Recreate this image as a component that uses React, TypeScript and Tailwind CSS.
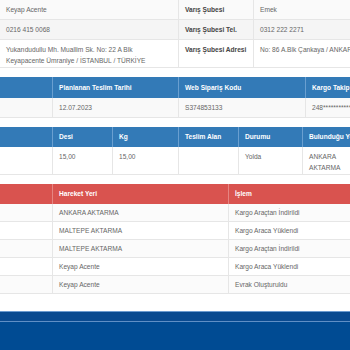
export default function App() {
  const font = { fontFamily: '"Liberation Sans", Arial, sans-serif' };

  const movements = [
    { place: 'ANKARA AKTARMA', action: 'Kargo Araçtan İndirildi' },
    { place: 'MALTEPE AKTARMA', action: 'Kargo Araca Yüklendi' },
    { place: 'MALTEPE AKTARMA', action: 'Kargo Araçtan İndirildi' },
    { place: 'Keyap Acente', action: 'Kargo Araca Yüklendi' },
    { place: 'Keyap Acente', action: 'Evrak Oluşturuldu' },
  ];

  return (
    <div className="w-[350px] h-[350px] overflow-hidden bg-white text-[6.6px] leading-[11px] text-[#666]" style={font}>
      {/* Gönderi bilgileri */}
      <div className="w-[420px]">
        <div className="grid grid-cols-[178px_75px_1fr] h-[20px] bg-[#fafafa] border-b border-[#e6e6e6]">
          <div className="px-[6px] pt-[4px]">Keyap Acente</div>
          <div className="px-[6px] pt-[4px] border-l border-[#e6e6e6] font-bold text-[#444]">Varış Şubesi</div>
          <div className="px-[6px] pt-[4px] border-l border-[#e6e6e6]">Emek</div>
        </div>
        <div className="grid grid-cols-[178px_75px_1fr] h-[20px] bg-[#f5f5f5] border-b border-[#e6e6e6]">
          <div className="px-[6px] pt-[4px]">0216 415 0068</div>
          <div className="px-[6px] pt-[4px] border-l border-[#e6e6e6] font-bold text-[#444]">Varış Şubesi Tel.</div>
          <div className="px-[6px] pt-[4px] border-l border-[#e6e6e6]">0312 222 2271</div>
        </div>
        <div className="grid grid-cols-[178px_75px_1fr] h-[28px] bg-white border-b border-[#e6e6e6]">
          <div className="px-[6px] pt-[4px]">
            Yukarıdudullu Mh. Muallim Sk. No: 22 A Blk
            <br />
            Keyapacente Ümraniye / İSTANBUL / TÜRKİYE
          </div>
          <div className="px-[6px] pt-[4px] border-l border-[#e6e6e6] font-bold text-[#444] whitespace-nowrap">Varış Şubesi Adresi</div>
          <div className="px-[6px] pt-[4px] border-l border-[#e6e6e6] whitespace-nowrap">No: 86 A.Blk Çankaya / ANKARA</div>
        </div>
      </div>

      {/* Teslim bilgileri */}
      <div className="w-[420px] mt-[9px]">
        <div className="grid grid-cols-[52px_126px_127px_1fr] h-[21px] bg-[#337ab7] text-white font-bold">
          <div className="px-[6px] pt-[5px]"></div>
          <div className="px-[6px] pt-[5px] border-l border-[#6a9fd0]">Planlanan Teslim Tarihi</div>
          <div className="px-[6px] pt-[5px] border-l border-[#6a9fd0]">Web Sipariş Kodu</div>
          <div className="px-[6px] pt-[5px] border-l border-[#6a9fd0] whitespace-nowrap">Kargo Takip No</div>
        </div>
        <div className="grid grid-cols-[52px_126px_127px_1fr] h-[20px] bg-[#f9f9f9] border-b border-[#e6e6e6]">
          <div className="px-[6px] pt-[4px]"></div>
          <div className="px-[6px] pt-[4px] border-l border-[#e6e6e6]">12.07.2023</div>
          <div className="px-[6px] pt-[4px] border-l border-[#e6e6e6]">S374853133</div>
          <div className="px-[6px] pt-[4px] border-l border-[#e6e6e6] whitespace-nowrap">248**************</div>
        </div>
      </div>

      {/* Kargo detayları */}
      <div className="w-[420px] mt-[9px]">
        <div className="grid grid-cols-[52px_60px_66px_60px_64px_1fr] h-[20px] bg-[#337ab7] text-white font-bold">
          <div className="px-[6px] pt-[4px]"></div>
          <div className="px-[6px] pt-[4px] border-l border-[#6a9fd0]">Desi</div>
          <div className="px-[6px] pt-[4px] border-l border-[#6a9fd0]">Kg</div>
          <div className="px-[6px] pt-[4px] border-l border-[#6a9fd0]">Teslim Alan</div>
          <div className="px-[6px] pt-[4px] border-l border-[#6a9fd0]">Durumu</div>
          <div className="px-[6px] pt-[4px] border-l border-[#6a9fd0] whitespace-nowrap">Bulunduğu Yer</div>
        </div>
        <div className="grid grid-cols-[52px_60px_66px_60px_64px_1fr] h-[28px] bg-white border-b border-[#e6e6e6]">
          <div className="px-[6px] pt-[4px]"></div>
          <div className="px-[6px] pt-[4px] border-l border-[#e6e6e6]">15,00</div>
          <div className="px-[6px] pt-[4px] border-l border-[#e6e6e6]">15,00</div>
          <div className="px-[6px] pt-[4px] border-l border-[#e6e6e6]"></div>
          <div className="px-[6px] pt-[4px] border-l border-[#e6e6e6]">Yolda</div>
          <div className="px-[6px] pt-[4px] border-l border-[#e6e6e6]">
            ANKARA
            <br />
            AKTARMA
          </div>
        </div>
      </div>

      {/* Hareketler */}
      <div className="w-[420px] mt-[9px]">
        <div className="grid grid-cols-[52px_176px_1fr] h-[20px] bg-[#d9534f] text-white font-bold">
          <div className="px-[6px] pt-[4px]"></div>
          <div className="px-[6px] pt-[4px] border-l border-[#e58582]">Hareket Yeri</div>
          <div className="px-[6px] pt-[4px] border-l border-[#e58582]">İşlem</div>
        </div>
        {movements.map((m, i) => (
          <div
            key={i}
            className={`grid grid-cols-[52px_176px_1fr] h-[18px] border-b border-[#e6e6e6] ${i % 2 === 0 ? 'bg-[#fbfbfb]' : 'bg-white'}`}
          >
            <div className="px-[6px] pt-[3px]"></div>
            <div className="px-[6px] pt-[3px] border-l border-[#e6e6e6]">{m.place}</div>
            <div className="px-[6px] pt-[3px] border-l border-[#e6e6e6]">{m.action}</div>
          </div>
        ))}
      </div>

      {/* Footer */}
      <div className="mt-[17px] h-[40px] bg-[#004b93] border-t border-[#6c9bd0]">
        <div className="h-[10px] bg-[#0a4a90] border-b border-[#5f8fc6]"></div>
      </div>
    </div>
  );
}
